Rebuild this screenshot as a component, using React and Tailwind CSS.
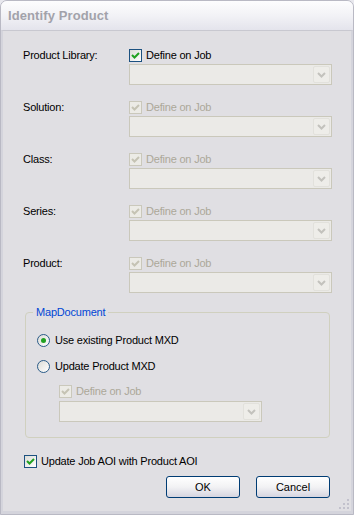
import React from "react";

const font = { fontFamily: '"Liberation Sans", Arial, sans-serif' };

function CheckBox({ disabled }) {
  return (
    <div
      className={
        disabled
          ? "w-[13px] h-[13px] border border-[#cac8bb] bg-[#ecebe6] flex items-center justify-center shrink-0"
          : "w-[13px] h-[13px] border border-[#1c5180] bg-gradient-to-br from-[#dcdcd7] to-white flex items-center justify-center shrink-0"
      }
    >
      <svg width="11" height="11" viewBox="0 0 11 11">
        <path
          d="M2 5 L4.5 7.5 L9 3"
          fill="none"
          stroke={disabled ? "#c5c3b4" : "#21a121"}
          strokeWidth="2"
        />
      </svg>
    </div>
  );
}

function Combo({ width }) {
  return (
    <div className={`${width} h-[21px] border border-[#cac8bb] bg-[#ebeae7] flex justify-end items-stretch p-[1px]`}>
      <div className="w-[17px] rounded-[2px] border border-[#e2e1dc] bg-[#eeede9] flex items-center justify-center">
        <svg width="9" height="6" viewBox="0 0 9 6">
          <path d="M1 1 L4.5 4.5 L8 1" fill="none" stroke="#c3c2bd" strokeWidth="2" />
        </svg>
      </div>
    </div>
  );
}

function Radio({ checked, label }) {
  return (
    <div className="flex items-center gap-[5px] h-[15px]">
      <div className="w-[13px] h-[13px] rounded-full border border-[#2a5b88] bg-gradient-to-br from-[#dcdcd7] to-white flex items-center justify-center">
        {checked && <div className="w-[5px] h-[5px] rounded-full bg-[#21a121]" />}
      </div>
      <span className="text-[11px] tracking-[-0.2px] text-black">{label}</span>
    </div>
  );
}

function FieldRow({ label, disabled }) {
  return (
    <div className="flex h-[52px]">
      <div className="w-[106px] text-[11px] tracking-[-0.2px] text-black leading-[15px]">{label}</div>
      <div className="flex flex-col gap-[1px]">
        <div className="flex items-center gap-[4px] h-[15px]">
          <CheckBox disabled={disabled} />
          <span
            className={
              disabled
                ? "text-[11px] tracking-[-0.2px] text-[#aca899]"
                : "text-[11px] tracking-[-0.2px] text-black"
            }
          >
            Define on Job
          </span>
        </div>
        <Combo width="w-[203px]" />
      </div>
    </div>
  );
}

function Button({ children }) {
  return (
    <div className="w-[74px] h-[22px] rounded-[3px] border border-[#003c74] bg-gradient-to-b from-white via-[#f2f2f4] to-[#d6d5e0] flex items-center justify-center text-[11px] text-black">
      {children}
    </div>
  );
}

function App() {
  return (
    <div style={font} className="w-[354px] h-[515px] bg-[#e8e8ee]">
      <div className="w-full h-full flex flex-col rounded-t-[7px] border border-[#b9b9c4] overflow-hidden">
        <div className="h-[29px] shrink-0 bg-gradient-to-b from-[#fdfdfe] via-[#f2f2f6] to-[#e4e4ec] flex items-center px-[7px]">
          <span className="text-[13px] font-bold text-[#a2a2aa] tracking-[0.1px]">Identify Product</span>
        </div>
        <div className="flex-1 flex flex-col border-x-[2px] border-b-[3px] border-t border-[#d4d4dc] border-t-[#c8c8d0] bg-[#e0dfe3] pl-[20px] pt-[17px] relative">
          <FieldRow label="Product Library:" />
          <FieldRow label="Solution:" disabled />
          <FieldRow label="Class:" disabled />
          <FieldRow label="Series:" disabled />
          <FieldRow label="Product:" disabled />

          <div className="mt-[4px] ml-[2px] w-[305px] h-[126px] border border-[#d0d0bf] rounded-[4px] flex flex-col pl-[11px]">
            <div className="-mt-[8px] ml-[-4px] px-[3px] bg-[#e0dfe3] self-start text-[11px] tracking-[-0.2px] leading-[15px] text-[#0046d5]">
              MapDocument
            </div>
            <div className="mt-[13px] flex flex-col gap-[11px]">
              <Radio checked label="Use existing Product MXD" />
              <Radio label="Update Product MXD" />
            </div>
            <div className="ml-[22px] mt-[10px] flex flex-col gap-[2px]">
              <div className="flex items-center gap-[4px] h-[15px]">
                <CheckBox disabled />
                <span className="text-[11px] tracking-[-0.2px] text-[#aca899]">Define on Job</span>
              </div>
              <Combo width="w-[203px]" />
            </div>
          </div>

          <div className="mt-[16px] ml-[1px] flex items-center gap-[4px] h-[15px]">
            <CheckBox />
            <span className="text-[11px] tracking-[-0.2px] text-black">Update Job AOI with Product AOI</span>
          </div>
          <div className="mt-[7px] flex gap-[16px] pl-[143px]">
            <Button>OK</Button>
            <Button>Cancel</Button>
          </div>
          <div className="absolute right-[1px] bottom-[1px]">
            <svg width="11" height="11" viewBox="0 0 11 11">
              <rect x="8" y="0" width="2" height="2" fill="#c2c1cc" />
              <rect x="4" y="4" width="2" height="2" fill="#c2c1cc" />
              <rect x="8" y="4" width="2" height="2" fill="#c2c1cc" />
              <rect x="0" y="8" width="2" height="2" fill="#c2c1cc" />
              <rect x="4" y="8" width="2" height="2" fill="#c2c1cc" />
              <rect x="8" y="8" width="2" height="2" fill="#c2c1cc" />
            </svg>
          </div>
        </div>
      </div>
    </div>
  );
}

export default App;
